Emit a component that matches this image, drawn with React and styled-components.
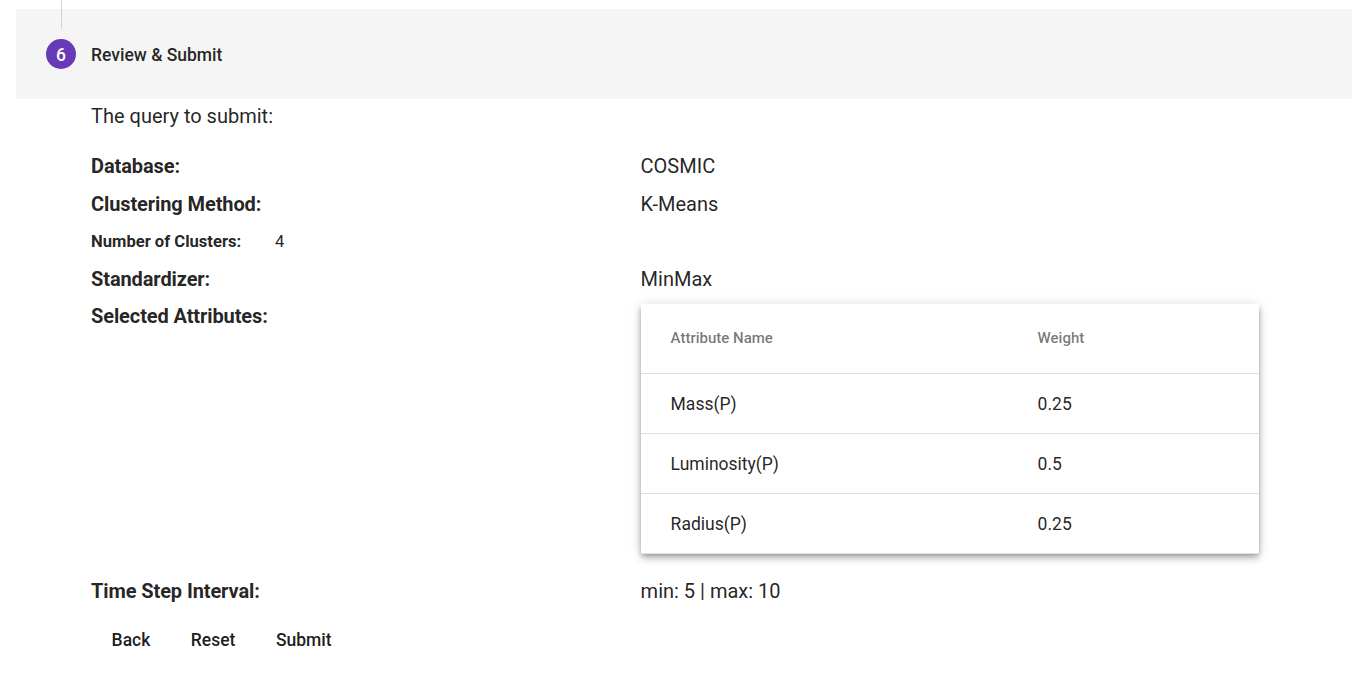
import React from "react";
import styled, { createGlobalStyle } from "styled-components";

const GlobalStyle = createGlobalStyle`
  body {
    margin: 0;
    background: #fff;
    color: rgba(0, 0, 0, 0.87);
    font-family: Roboto, "Liberation Sans", sans-serif;
    overflow: hidden;
  }
  * { box-sizing: border-box; }
`;

const Page = styled.main`
  height: 678px;
  overflow: hidden;
`;

const Connector = styled.div`
  height: 9px;
  margin-left: 61px;
  border-left: 1px solid #d3d3d3;
`;

const StepHeader = styled.header`
  display: flex;
  align-items: center;
  gap: 15px;
  height: 90px;
  margin-left: 16px;
  padding-left: 30px;
  background: #f5f5f5;
`;

const StepMarker = styled.div`
  display: flex;
  flex-direction: column;
  align-items: center;
  height: 90px;
  width: 30px;

  &::before {
    content: "";
    width: 1px;
    height: 20px;
    margin-bottom: 10px;
    background: #d3d3d3;
  }
`;

const StepNumber = styled.span`
  width: 30px;
  height: 30px;
  border-radius: 50%;
  background: #673ab7;
  color: #fff;
  font-size: 17.5px;
  font-weight: 500;
  line-height: 32px;
  text-align: center;
`;

const StepTitle = styled.span`
  font-size: 17.5px;
  font-weight: 500;
  line-height: 24px;
  padding-top: 1px;
`;

const Content = styled.section`
  padding-left: 91px;
  font-size: 20px;
`;

const Intro = styled.p`
  margin: 0;
  height: 48px;
  line-height: 35px;
`;

const Row = styled.div`
  display: grid;
  grid-template-columns: 549.6px 618.4px;
  height: ${(p) => p.$height || 37.5}px;
  line-height: 38px;
`;

const Label = styled.strong`
  font-weight: 700;
  letter-spacing: -0.1px;
`;

const Value = styled.span`
  font-weight: 400;
`;

const SubRow = styled.div`
  display: flex;
  height: 37.5px;
  font-size: 16.6px;
  line-height: 39px;
`;

const SubLabel = styled.strong`
  width: 184px;
  font-weight: 700;
`;

const Table = styled.div`
  height: 250px;
  margin-top: 6.5px;
  background: #fff;
  box-shadow: 0 2.5px 5px -1.25px rgba(0,0,0,.3), 0 5px 6.25px rgba(0,0,0,.16), 0 1.25px 12.5px rgba(0,0,0,.14);
`;

const TableRow = styled.div`
  display: grid;
  grid-template-columns: 367px 1fr;
  align-items: center;
  height: ${(p) => (p.$head ? 70 : 60)}px;
  padding: ${(p) => (p.$head ? "0 0 1px 30px" : "2px 0 0 30px")};
  border-bottom: 1px solid #e0e0e0;
  color: ${(p) => (p.$head ? "rgba(0,0,0,.54)" : "inherit")};
  font-size: ${(p) => (p.$head ? 15 : 17.5)}px;
  font-weight: ${(p) => (p.$head ? 500 : 400)};
  line-height: 24px;
`;

const Actions = styled.div`
  display: flex;
  gap: 40.5px;
  padding: 10px 20.6px;
`;

const Action = styled.button`
  padding: 0;
  border: 0;
  background: transparent;
  color: rgba(0, 0, 0, 0.9);
  font: 500 17.5px/40px Roboto, "Liberation Sans", sans-serif;
`;

const attributes = [
  ["Mass(P)", "0.25"],
  ["Luminosity(P)", "0.5"],
  ["Radius(P)", "0.25"],
];

const Field = ({ label, value }) => (
  <Row><Label>{label}</Label><Value>{value}</Value></Row>
);

export default function App() {
  return (
    <Page>
      <GlobalStyle />
      <Connector />
      <StepHeader>
        <StepMarker><StepNumber>6</StepNumber></StepMarker>
        <StepTitle>Review &amp; Submit</StepTitle>
      </StepHeader>
      <Content>
        <Intro>The query to submit:</Intro>
        <Field label="Database:" value="COSMIC" />
        <Field label="Clustering Method:" value="K-Means" />
        <SubRow><SubLabel>Number of Clusters:</SubLabel><span>4</span></SubRow>
        <Field label="Standardizer:" value="MinMax" />
        <Row $height={275}>
          <Label>Selected Attributes:</Label>
          <Table>
            <TableRow $head><span>Attribute Name</span><span>Weight</span></TableRow>
            {attributes.map(([name, weight]) => (
              <TableRow key={name}><span>{name}</span><span>{weight}</span></TableRow>
            ))}
          </Table>
        </Row>
        <Field label="Time Step Interval:" value="min: 5 | max: 10" />
        <Actions>
          <Action>Back</Action><Action>Reset</Action><Action>Submit</Action>
        </Actions>
      </Content>
    </Page>
  );
}
